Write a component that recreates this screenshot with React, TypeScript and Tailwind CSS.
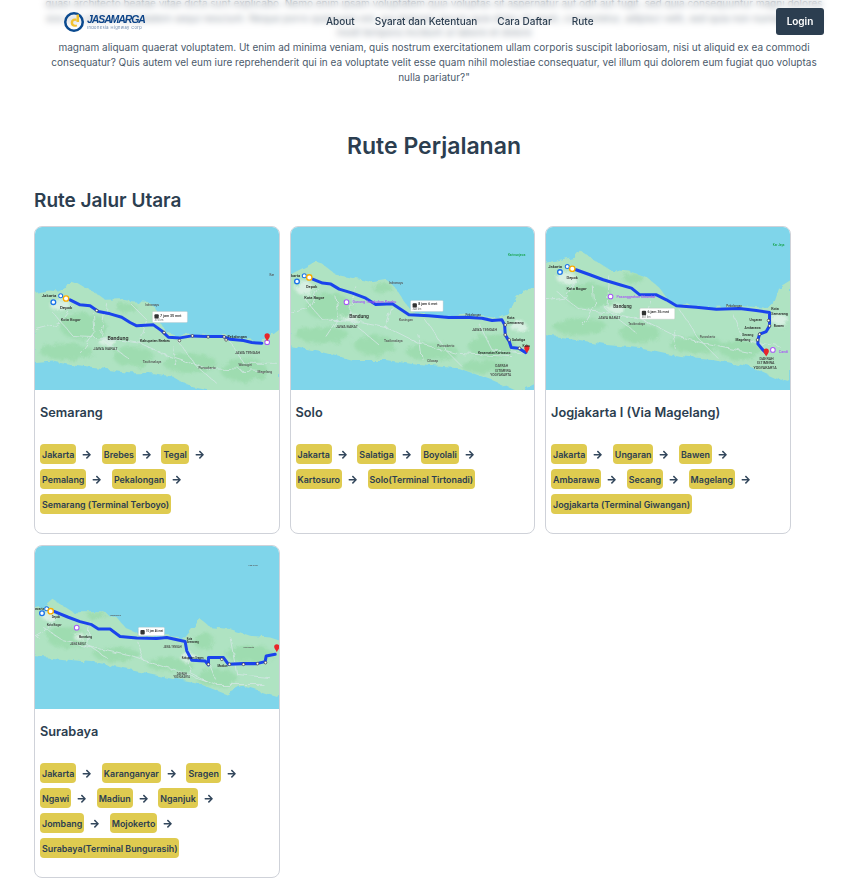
import { FaArrowRight } from "react-icons/fa";

type Label = [number, number, string, number?, string?];

type MapData = {
  id: string;
  viewBox: string;
  land: string;
  route: string;
  patches: [number, number, number, number][];
  pale: [number, number, number, number][];
  roads: string[];
  rings: [number, number][];
  orange: [number, number];
  blue: [number, number];
  small: [number, number];
  pin: [number, number];
  purple?: [number, number][];
  tip: { x: number; y: number; w: number; h: number; time: string; dist: string };
  labels: Label[];
};

const semarangMap: MapData = {
  id: "coast-a",
  viewBox: "15 22 730 488",
  land: "M10 220 L35 215 L60 212 L85 215 L105 205 L118 182 L140 190 L165 205 L195 218 L225 240 L270 238 L310 245 L345 245 L375 262 L385 300 L405 335 L440 348 L490 342 L540 345 L590 348 L640 358 L690 365 L720 345 L750 322 L750 515 L560 515 L480 500 L430 470 L370 460 L300 460 L220 448 L130 437 L70 425 L10 430 Z",
  route: "M120 240 L150 255 L180 258 L205 275 L240 282 L275 292 L300 308 L320 318 L370 315 L395 333 L415 352 L450 354 L485 348 L530 350 L580 350 L600 358 L640 362 L665 368 L695 370",
  patches: [[160, 320, 70, 40], [110, 395, 80, 25], [310, 410, 60, 30], [480, 430, 80, 30], [640, 450, 70, 35], [290, 265, 30, 15]],
  pale: [[90, 255, 30, 20], [230, 365, 25, 12]],
  roads: ["M70 280 L130 350 L230 355 L330 370 L420 410 L530 445 L700 455", "M230 250 L210 350 L300 420", "M440 360 L500 440 L560 490", "M600 365 L640 430 L740 430", "M190 280 L195 340 L150 400", "M330 370 L350 300 L300 250", "M15 330 L90 310 L130 260", "M430 380 L440 440"],
  rings: [[200, 272], [402, 338], [448, 362], [487, 348], [534, 351], [582, 351], [588, 360]],
  orange: [108, 236],
  blue: [70, 247],
  small: [92, 228],
  pin: [711, 352],
  purple: [[711, 367]],
  tip: { x: 367, y: 275, w: 105, h: 33, time: "7 jam 35 mnt", dist: "375 km" },
  labels: [
    [35, 233, "Jakarta", 13, "#222"],
    [90, 269, "Depok", 13, "#222"],
    [92, 302, "Kota Bogor", 12, "#333"],
    [232, 359, "Bandung", 16, "#222"],
    [190, 391, "JAWA BARAT", 12, "#444"],
    [330, 367, "Kabupaten Brebes", 11, "#222"],
    [592, 353, "Pekalongan", 11, "#222"],
    [615, 402, "JAWA TENGAH", 11, "#444"],
    [625, 438, "Wonogiri", 10, "#555"],
    [682, 458, "Magelang", 10, "#555"],
    [505, 447, "Purwokerto", 10, "#555"],
    [338, 430, "Tasikmalaya", 10, "#555"],
    [718, 168, "Kar", 9, "#555"],
    [345, 258, "Indramayu", 9, "#555"],
  ],
};

const soloMap: MapData = {
  id: "coast-b",
  viewBox: "15 22 733 488",
  land: "M10 170 L50 150 L80 135 L85 122 L105 128 L150 165 L200 175 L250 185 L300 178 L330 205 L350 235 L375 270 L400 283 L480 290 L540 285 L600 290 L640 295 L665 285 L690 230 L710 210 L753 205 L753 490 L700 515 L620 480 L520 445 L400 435 L300 420 L200 420 L100 395 L10 378 Z",
  route: "M80 178 L110 190 L135 193 L160 208 L200 220 L240 235 L270 254 L320 252 L345 268 L370 285 L430 288 L490 293 L540 292 L590 295 L620 302 L650 300 L658 315 L660 345 L672 365 L678 383 L700 385 L722 398",
  patches: [[130, 260, 70, 40], [110, 345, 80, 25], [265, 375, 60, 30], [440, 395, 80, 25], [620, 380, 70, 35], [600, 440, 70, 20], [290, 205, 30, 15]],
  pale: [[55, 205, 28, 20], [195, 295, 25, 12], [700, 320, 25, 15]],
  roads: ["M50 230 L110 300 L210 305 L310 325 L400 370 L510 400 L680 410", "M210 200 L190 300 L280 375", "M420 300 L480 390 L530 440", "M580 310 L620 390 L720 400", "M150 230 L160 290 L120 350", "M300 325 L320 260", "M15 280 L70 265 L95 205", "M400 345 L410 420"],
  rings: [[660, 315], [660, 345], [672, 360], [703, 385]],
  orange: [70, 173],
  blue: [33, 185],
  small: [55, 168],
  pin: [725, 388],
  purple: [[182, 247]],
  tip: { x: 375, y: 242, w: 98, h: 33, time: "8 jam 6 mnt", dist: "348 km" },
  labels: [
    [15, 172, "karta", 12, "#222"],
    [60, 205, "Depok", 12, "#222"],
    [55, 238, "Kota Bogor", 12, "#222"],
    [190, 294, "Bandung", 15, "#222"],
    [150, 323, "JAWA BARAT", 11, "#444"],
    [200, 251, "Gunung Tangkuban Parahu", 11, "#a855f7"],
    [340, 303, "Kuningan", 10, "#555"],
    [295, 366, "Tasikmalaya", 10, "#555"],
    [455, 382, "Purwokerto", 10, "#555"],
    [425, 427, "Cilacap", 10, "#555"],
    [560, 334, "JAWA TENGAH", 11, "#444"],
    [665, 298, "Kota", 11, "#222"],
    [665, 311, "Semarang", 11, "#222"],
    [680, 363, "Salatiga", 11, "#222"],
    [712, 380, "Kabu", 10, "#222"],
    [578, 402, "Kecamatan Kartosuro", 10, "#222"],
    [630, 442, "DAERAH", 10, "#444"],
    [630, 455, "ISTIMEWA", 10, "#444"],
    [615, 468, "YOGYAKARTA", 10, "#444"],
    [668, 108, "Karimunjawa", 9, "#16a34a"],
    [310, 194, "Indramayu", 9, "#555"],
    [540, 287, "Pekalongan", 9, "#444"],
  ],
};

const jogjaMap: MapData = {
  id: "coast-c",
  viewBox: "18 22 732 488",
  land: "M13 130 L60 120 L105 110 L120 92 L150 112 L210 150 L270 155 L320 172 L355 200 L390 245 L430 255 L500 262 L590 258 L660 262 L695 265 L715 205 L755 180 L755 485 L700 470 L630 440 L520 418 L420 408 L310 385 L200 375 L90 355 L13 345 Z",
  route: "M108 150 L150 165 L190 180 L240 195 L275 205 L300 225 L350 225 L380 240 L410 258 L470 262 L530 268 L600 266 L650 272 L690 278 L690 300 L690 318 L680 335 L660 343 L655 360 L655 372 L670 390 L680 400",
  patches: [[150, 230, 70, 40], [120, 320, 80, 25], [300, 340, 60, 30], [470, 375, 80, 25], [600, 390, 60, 30], [280, 175, 30, 15]],
  pale: [[80, 175, 28, 20], [225, 265, 25, 12], [720, 300, 25, 18]],
  roads: ["M50 215 L120 270 L210 280 L310 300 L400 345 L510 375 L640 400", "M210 170 L200 270 L290 340", "M420 270 L480 360 L530 410", "M580 280 L610 360 L720 380", "M160 200 L165 260 L130 320", "M310 300 L330 240", "M18 240 L80 230 L105 180", "M400 325 L410 390"],
  rings: [[687, 302], [690, 318], [660, 343], [654, 360]],
  orange: [97, 147],
  blue: [60, 157],
  small: [82, 140],
  pin: [680, 398],
  purple: [[212, 230], [700, 390]],
  tip: { x: 300, y: 265, w: 105, h: 33, time: "6 jam 36 mnt", dist: "361 km" },
  labels: [
    [25, 144, "Jakarta", 12, "#222"],
    [80, 177, "Depok", 12, "#222"],
    [80, 211, "Kota Bogor", 12, "#222"],
    [220, 266, "Bandung", 14, "#222"],
    [175, 298, "JAWA BARAT", 11, "#444"],
    [230, 234, "Pasanggrahan Cikundul", 11, "#a855f7"],
    [695, 271, "Kota", 11, "#222"],
    [695, 285, "Semarang", 11, "#222"],
    [630, 304, "Ungaran", 10, "#222"],
    [703, 320, "Bawen", 10, "#222"],
    [615, 328, "Ambarawa", 10, "#222"],
    [608, 348, "Secang", 10, "#222"],
    [588, 362, "Magelang", 10, "#222"],
    [660, 419, "DAERAH", 11, "#333"],
    [653, 433, "ISTIMEWA", 11, "#333"],
    [642, 446, "YOGYAKARTA", 11, "#333"],
    [718, 398, "Candi", 11, "#a855f7"],
    [700, 80, "Kar Jaya", 9, "#16a34a"],
    [265, 315, "Tasikmalaya", 9, "#555"],
    [480, 355, "Purwokerto", 9, "#555"],
    [560, 262, "Pekalongan", 9, "#444"],
  ],
};

const surabayaMap: MapData = {
  id: "coast-d",
  viewBox: "15 18 730 485",
  land: "M10 205 L50 195 L70 178 L90 190 L130 215 L215 215 L260 230 L290 265 L340 285 L400 285 L465 290 L490 260 L510 235 L540 260 L600 265 L660 285 L720 290 L750 300 L750 470 L640 435 L590 460 L500 425 L410 408 L300 385 L200 365 L100 355 L10 345 Z",
  route: "M70 212 L115 230 L150 243 L185 252 L205 265 L240 265 L270 287 L320 292 L380 293 L410 290 L465 302 L470 330 L485 358 L525 360 L535 372 L535 350 L580 350 L595 370 L640 368 L680 368 L705 362 L708 345 L735 340",
  patches: [[110, 290, 60, 30], [260, 340, 70, 20], [420, 370, 70, 20], [560, 410, 60, 25], [660, 340, 70, 25], [520, 300, 30, 25], [200, 225, 30, 10]],
  pale: [[55, 225, 22, 14], [150, 290, 18, 10], [475, 350, 25, 14]],
  roads: ["M40 260 L100 300 L190 320 L300 345 L440 390 L560 430 L700 430", "M180 240 L170 310 L230 350", "M470 340 L480 395 L530 420", "M600 290 L620 400 L720 410", "M320 300 L340 360", "M540 370 L560 420", "M15 290 L50 270 L70 230"],
  rings: [[535, 370], [575, 355], [598, 370], [640, 370], [682, 368], [706, 365]],
  orange: [62, 212],
  blue: [36, 218],
  small: [50, 205],
  pin: [740, 322],
  purple: [[140, 261]],
  tip: { x: 325, y: 260, w: 78, h: 25, time: "10 jam 46 mnt", dist: "665 km" },
  labels: [
    [15, 208, "awarta", 9, "#222"],
    [65, 232, "Depok", 9, "#222"],
    [50, 256, "Kota Bogor", 9, "#333"],
    [147, 293, "Bandung", 10, "#222"],
    [120, 314, "JAWA BARAT", 8, "#444"],
    [400, 322, "JAWA TENGAH", 8, "#444"],
    [470, 298, "Kota", 8, "#222"],
    [470, 306, "Semarang", 8, "#222"],
    [562, 378, "Madiun", 9, "#222"],
    [455, 353, "Kabupaten Sragen", 8, "#222"],
    [440, 403, "DAERAH", 8, "#444"],
    [430, 412, "YOGYAKARTA", 8, "#444"],
    [655, 78, "Lab Aran", 7, "#555"],
    [240, 225, "Indramayu", 7, "#555"],
    [640, 322, "Mojokerto", 7, "#555"],
  ],
};

type Route = { title: string; map: MapData; stops: string[] };

const routes: Route[] = [
  { title: "Semarang", map: semarangMap, stops: ["Jakarta", "Brebes", "Tegal", "Pemalang", "Pekalongan", "Semarang (Terminal Terboyo)"] },
  { title: "Solo", map: soloMap, stops: ["Jakarta", "Salatiga", "Boyolali", "Kartosuro", "Solo(Terminal Tirtonadi)"] },
  { title: "Jogjakarta I (Via Magelang)", map: jogjaMap, stops: ["Jakarta", "Ungaran", "Bawen", "Ambarawa", "Secang", "Magelang", "Jogjakarta (Terminal Giwangan)"] },
  { title: "Surabaya", map: surabayaMap, stops: ["Jakarta", "Karanganyar", "Sragen", "Ngawi", "Madiun", "Nganjuk", "Jombang", "Mojokerto", "Surabaya(Terminal Bungurasih)"] },
];

function RouteMap({ data }: { data: MapData }) {
  const [px, py] = data.pin;
  return (
    <svg viewBox={data.viewBox} preserveAspectRatio="none" className="block h-[163px] w-full bg-[#7fd5ea]">
      <defs>
        <filter id={data.id} x="-5%" y="-5%" width="110%" height="110%" colorInterpolationFilters="sRGB">
          <feTurbulence type="fractalNoise" baseFrequency="0.035" numOctaves="3" seed="4" />
          <feDisplacementMap in="SourceGraphic" scale="22" />
        </filter>
        <clipPath id={`${data.id}-clip`}>
          <path d={data.land} />
        </clipPath>
      </defs>
      <g className="blur-[0.5px]">
        <g filter={`url(#${data.id})`}>
          <path d={data.land} className="fill-[#afe3c2]" />
          <g clipPath={`url(#${data.id}-clip)`}>
            <g className="blur-[5px]">
              {data.patches.map(([cx, cy, rx, ry], i) => (
                <ellipse key={i} cx={cx} cy={cy} rx={rx} ry={ry} className="fill-[#9edcb0]" />
              ))}
              {data.pale.map(([cx, cy, rx, ry], i) => (
                <ellipse key={i} cx={cx} cy={cy} rx={rx} ry={ry} className="fill-[#d8efe2]" />
              ))}
            </g>
            {data.roads.map((d, i) => (
              <path key={i} d={d} fill="none" strokeWidth={2.5} className="stroke-[#d3e6e3]" />
            ))}
          </g>
        </g>
        <path d={data.route} fill="none" strokeWidth={9} strokeLinejoin="round" strokeLinecap="round" className="stroke-[#1a44ec]" />
        {data.rings.map(([x, y], i) => (
          <circle key={i} cx={x} cy={y} r={4} strokeWidth={2} className="fill-white stroke-[#333]" />
        ))}
        {data.purple?.map(([x, y], i) => (
          <circle key={i} cx={x} cy={y} r={7} strokeWidth={3} className="fill-white stroke-[#a855f7]" />
        ))}
        <circle cx={data.small[0]} cy={data.small[1]} r={6} strokeWidth={3} className="fill-white stroke-[#1a73e8]" />
        <circle cx={data.blue[0]} cy={data.blue[1]} r={7} strokeWidth={4} className="fill-white stroke-[#1a73e8]" />
        <circle cx={data.orange[0]} cy={data.orange[1]} r={8} strokeWidth={4} className="fill-white stroke-[#f9ab00]" />
        <path
          d={`M${px} ${py + 12} C${px - 3} ${py + 4} ${px - 8} ${py + 2} ${px - 8} ${py - 4} A8 8 0 1 1 ${px + 8} ${py - 4} C${px + 8} ${py + 2} ${px + 3} ${py + 4} ${px} ${py + 12} Z`}
          className="fill-[#e8262a]"
        />
        {data.labels.map(([x, y, text, size = 11, color = "#444"], i) => (
          <text key={i} x={x} y={y} fontSize={size} fill={color} fontWeight={500} className="font-['Roboto',sans-serif]">
            {text}
          </text>
        ))}
        <rect x={data.tip.x} y={data.tip.y} width={data.tip.w} height={data.tip.h} rx={3} strokeWidth={1} className="fill-white stroke-[#bbb]" />
        <rect x={data.tip.x + 6} y={data.tip.y + 8} width={13} height={13} rx={3} className="fill-[#333]" />
        <text x={data.tip.x + 23} y={data.tip.y + 15} fontSize={data.tip.h < 30 ? 8 : 11} fontWeight={500} fill="#222" className="font-['Roboto',sans-serif]">
          {data.tip.time}
        </text>
        {data.tip.h >= 30 && (
          <text x={data.tip.x + 6} y={data.tip.y + 29} fontSize={8} fill="#666" className="font-['Roboto',sans-serif]">
            {data.tip.dist}
          </text>
        )}
      </g>
    </svg>
  );
}

function RouteCard({ route }: { route: Route }) {
  return (
    <div className="w-[245.5px] overflow-hidden rounded-lg border border-[#cfd2d9] bg-white">
      <RouteMap data={route.map} />
      <div className="px-[5px] pb-[19px] pt-[15px]">
        <h3 className="text-[12.75px] font-semibold leading-[16px] text-[#2c3e50]">{route.title}</h3>
        <div className="mt-[23px] flex flex-wrap gap-x-[10px] gap-y-[5px]">
          {route.stops.map((stop, i) => (
            <div key={stop} className="flex items-center gap-[6px]">
              <span className="flex h-[20px] items-center rounded-[4px] bg-[#dfcb50] px-[2px] text-[8.9px] font-semibold text-[#2c3e50]">{stop}</span>
              {i < route.stops.length - 1 && <FaArrowRight className="text-[9.5px] text-[#33475c]" />}
            </div>
          ))}
        </div>
      </div>
    </div>
  );
}

function Navbar() {
  return (
    <nav className="absolute inset-x-0 top-0 flex h-[43px] items-center bg-white/40 backdrop-blur-[3px]">
      <div className="ml-[64px] flex items-center gap-[3px]">
        <svg viewBox="0 0 24 24" className="h-[20px] w-[20px]">
          <circle cx="12" cy="12" r="10.5" fill="none" stroke="#0b4a8f" strokeWidth="3" />
          <path d="M8 13 C8 9 11 7 15 8 L15 11 C12 10 11 11 11 13 C11 15 13 16 15 15 L16 17 C12 19 8 17 8 13 Z" fill="#f2c230" />
          <path d="M15 3 L18 3 L18 12 L15 12 Z" fill="#f2c230" />
        </svg>
        <div className="flex w-[59px] flex-col">
          <span className="font-['Liberation_Sans',sans-serif] text-[10.5px] font-bold italic leading-[11px] tracking-[-1.1px] text-[#0d4488]">JASAMARGA</span>
          <span className="whitespace-nowrap text-[4px] leading-[5px] tracking-[0.4px] text-[#5f7ea6]">Indonesia Highway Corp</span>
        </div>
      </div>
      <div className="ml-[180px] flex items-center gap-[20px] text-[10px] font-medium text-[#2c3e50]">
        <a href="#about">About</a>
        <a href="#syarat">Syarat dan Ketentuan</a>
        <a href="#daftar">Cara Daftar</a>
        <a href="#rute">Rute</a>
      </div>
      <button className="ml-auto mr-[24px] h-[27px] w-[48px] rounded-[3px] bg-[#2c3e50] text-[10px] font-semibold text-white">Login</button>
    </nav>
  );
}

export default function App() {
  return (
    <div className="relative h-[891px] w-[848px] overflow-hidden bg-white font-['Inter',sans-serif]">
      <main className="ml-[34px] w-[800px]">
        <p className="mx-auto -mt-[19px] w-[780px] text-center text-[10px] leading-[14.75px] text-[#4b5a6b]">
          "Sed ut perspiciatis unde omnis iste natus error sit voluptatem accusantium doloremque laudantium, totam rem aperiam, eaque ipsa quae ab illo inventore veritatis et quasi architecto beatae vitae dicta sunt explicabo. Nemo enim ipsam voluptatem quia voluptas sit aspernatur aut odit aut fugit, sed quia consequuntur magni dolores eos qui ratione voluptatem sequi nesciunt. Neque porro quisquam est, qui dolorem ipsum quia dolor sit amet, consectetur, adipisci velit, sed quia non numquam eius modi tempora incidunt ut labore et dolore
          <br />
          magnam aliquam quaerat voluptatem. Ut enim ad minima veniam, quis nostrum exercitationem ullam corporis suscipit laboriosam, nisi ut aliquid ex ea commodi
          <br />
          consequatur? Quis autem vel eum iure reprehenderit qui in ea voluptate velit esse quam nihil molestiae consequatur, vel illum qui dolorem eum fugiat quo voluptas
          <br />
          nulla pariatur?"
        </p>
        <h1 className="mt-[47px] text-center text-[23px] font-semibold leading-[30px] text-[#2c3e50]">Rute Perjalanan</h1>
        <h2 className="mt-[28px] text-[19px] font-semibold leading-[24px] text-[#2c3e50]">Rute Jalur Utara</h2>
        <div className="mt-[13px] flex flex-wrap gap-x-[10px] gap-y-[11px]">
          {routes.map((route) => (
            <RouteCard key={route.title} route={route} />
          ))}
        </div>
      </main>
      <Navbar />
    </div>
  );
}
